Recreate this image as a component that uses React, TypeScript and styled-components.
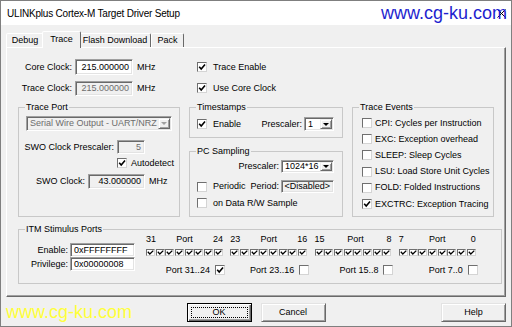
import React from "react";
import styled, { createGlobalStyle, css } from "styled-components";

const GlobalStyle = createGlobalStyle`
  html, body { margin: 0; padding: 0; background: #ffffff; }
  * { box-sizing: border-box; }
`;

const Window = styled.div`
  position: relative;
  width: 512px;
  height: 327px;
  border: 1px solid #7f7f7f;
  background: #f0f0f0;
  display: flex;
  flex-direction: column;
  font-family: "Liberation Sans", Arial, sans-serif;
  font-size: 9px;
  line-height: 11px;
  color: #000;
  overflow: hidden;
`;

const TitleBar = styled.div`
  flex: none;
  height: 24px;
  background: #ffffff;
  display: flex;
  align-items: center;
  padding: 0 5px 0 6px;
`;

const TitleText = styled.span`
  font-size: 10px;
  letter-spacing: -0.2px;
`;

const CloseGlyph = styled.svg`
  margin-left: auto;
  flex: none;
`;

const Watermark = styled.div<{ $color: string; $left: number; $top: number }>`
  position: absolute;
  left: ${(p) => p.$left}px;
  top: ${(p) => p.$top}px;
  font-size: 18px;
  line-height: 18px;
  color: ${(p) => p.$color};
  white-space: nowrap;
  pointer-events: none;
  z-index: 5;
`;

const Body = styled.div`
  flex: 1;
  display: flex;
  flex-direction: column;
  padding: 6px 5px 0 5px;
`;

const TabStrip = styled.div`
  display: flex;
  align-items: flex-end;
  height: 16px;
  position: relative;
  z-index: 2;
`;

const Tab = styled.div<{ $w: number; $active?: boolean }>`
  position: relative;
  width: ${(p) => p.$w}px;
  height: 14px;
  display: flex;
  align-items: center;
  justify-content: center;
  border: 1px solid;
  border-bottom: none;
  border-color: #ffffff #696969 transparent #ffffff;
  border-radius: 2px 2px 0 0;
  background: #f0f0f0;
  white-space: nowrap;
  ${(p) =>
    p.$active &&
    css`
      width: ${p.$w + 4}px;
      height: 17px;
      margin: 0 -2px -1px -2px;
      padding-bottom: 2px;
      z-index: 3;
    `}
`;

const TabPage = styled.div`
  position: relative;
  z-index: 1;
  width: 500px;
  height: 250px;
  border: 1px solid;
  border-color: #ffffff #696969 #696969 #ffffff;
  box-shadow: inset -1px -1px 0 #a0a0a0;
  padding: 11px 3px 0 11px;
  display: flex;
  flex-direction: column;
`;

const TopRows = styled.div`
  display: flex;
  flex-direction: column;
  gap: 5px;
`;

const ClockRow = styled.div`
  display: flex;
  align-items: center;
  height: 16px;
`;

const LabelCell = styled.div<{ $w: number }>`
  flex: none;
  width: ${(p) => p.$w}px;
  display: flex;
  justify-content: flex-end;
  white-space: nowrap;
`;

const Unit = styled.span<{ $w?: number }>`
  flex: none;
  margin-left: 4px;
  width: ${(p) => (p.$w ? `${p.$w}px` : "auto")};
  white-space: nowrap;
`;

type EditVariant = "normal" | "disabled" | "readonly";

const Edit = styled.div<{ $w: number; $h: number; $variant?: EditVariant; $align?: "left" | "right"; $ml?: number }>`
  flex: none;
  width: ${(p) => p.$w}px;
  height: ${(p) => p.$h}px;
  margin-left: ${(p) => p.$ml ?? 0}px;
  border: 1px solid;
  border-color: #a0a0a0 #ffffff #ffffff #a0a0a0;
  box-shadow: inset 1px 1px 0 #696969, inset -1px -1px 0 #e3e3e3;
  background: ${(p) => (p.$variant && p.$variant !== "normal" ? "#f0f0f0" : "#ffffff")};
  color: ${(p) => (p.$variant === "disabled" ? "#6d6d6d" : "#000000")};
  display: flex;
  align-items: center;
  justify-content: ${(p) => (p.$align === "left" ? "flex-start" : "flex-end")};
  padding: 0 3px 0 3px;
  white-space: nowrap;
  overflow: hidden;
`;

const Combo = styled.div<{ $w: number; $h: number; $disabled?: boolean; $ml?: number }>`
  flex: none;
  width: ${(p) => p.$w}px;
  height: ${(p) => p.$h}px;
  margin-left: ${(p) => p.$ml ?? 0}px;
  border: 1px solid;
  border-color: #a0a0a0 #ffffff #ffffff #a0a0a0;
  box-shadow: inset 1px 1px 0 #696969, inset -1px -1px 0 #e3e3e3;
  background: ${(p) => (p.$disabled ? "#f0f0f0" : "#ffffff")};
  color: ${(p) => (p.$disabled ? "#6d6d6d" : "#000000")};
  display: flex;
  align-items: stretch;
  padding: 1px;
  white-space: nowrap;
  overflow: hidden;
`;

const ComboText = styled.span`
  flex: 1;
  display: flex;
  align-items: center;
  padding-left: 2px;
  overflow: hidden;
`;

const ComboArrow = styled.span<{ $disabled?: boolean }>`
  flex: none;
  width: 12px;
  background: #f0f0f0;
  border: 1px solid;
  border-color: #f0f0f0 #696969 #696969 #f0f0f0;
  box-shadow: inset 1px 1px 0 #ffffff, inset -1px -1px 0 #a0a0a0;
  display: flex;
  align-items: center;
  justify-content: center;
  &::after {
    content: "";
    width: 0;
    height: 0;
    border-left: 3px solid transparent;
    border-right: 3px solid transparent;
    border-top: 3px solid ${(p) => (p.$disabled ? "#a0a0a0" : "#000000")};
  }
`;

const Box = styled.span<{ $w: number; $h: number }>`
  flex: none;
  width: ${(p) => p.$w}px;
  height: ${(p) => p.$h}px;
  background: #ffffff;
  border: 1px solid;
  border-color: #6f6f6f #d4d4d4 #d4d4d4 #6f6f6f;
  display: flex;
  align-items: center;
  justify-content: center;
`;

const CheckItem = styled.div<{ $h?: number; $gap?: number }>`
  display: flex;
  align-items: center;
  height: ${(p) => (p.$h ? `${p.$h}px` : "auto")};
  white-space: nowrap;
  & > span:last-child {
    margin-left: ${(p) => p.$gap ?? 6}px;
  }
`;

const Group = styled.fieldset<{ $w?: number; $h?: number }>`
  margin: 0;
  min-width: 0;
  width: ${(p) => (p.$w ? `${p.$w}px` : "auto")};
  height: ${(p) => (p.$h ? `${p.$h}px` : "auto")};
  border: 1px solid #c8c8c8;
  padding: 0;
  display: flex;
  flex-direction: column;
`;

const Caption = styled.legend`
  margin-left: 6px;
  padding: 0 1px;
  font-size: 9px;
  line-height: 12px;
`;

const GroupsRow = styled.div`
  display: flex;
  gap: 9px;
  height: 116px;
  margin-top: 5px;
`;

const MidColumn = styled.div`
  width: 154px;
  display: flex;
  flex-direction: column;
  gap: 7px;
`;

const TracePortBody = styled.div`
  padding: 0 7px;
  display: flex;
  flex-direction: column;
`;

const FormRow = styled.div<{ $mt: number; $h: number; $pl?: number; $end?: boolean }>`
  display: flex;
  align-items: center;
  margin-top: ${(p) => p.$mt}px;
  height: ${(p) => p.$h}px;
  padding-left: ${(p) => p.$pl ?? 0}px;
  justify-content: ${(p) => (p.$end ? "flex-end" : "flex-start")};
  white-space: nowrap;
`;

const PushRight = styled.div`
  margin-left: auto;
  display: flex;
  align-items: center;
  height: 100%;
`;

const InnerPad = styled.div<{ $pt?: number; $pl?: number; $pr?: number }>`
  display: flex;
  flex-direction: column;
  padding: ${(p) => p.$pt ?? 0}px ${(p) => p.$pr ?? 0}px 0 ${(p) => p.$pl ?? 0}px;
`;

const EventRow = styled.div`
  height: 16.2px;
  display: flex;
  align-items: center;
  white-space: nowrap;
  & > span:last-child {
    margin-left: 3px;
  }
`;

const ItmGroup = styled(Group)`
  margin-top: 6px;
  height: 61px;
`;

const ItmContent = styled.div`
  display: flex;
`;

const ItmLeft = styled.div`
  margin-top: 8px;
  display: flex;
  flex-direction: column;
`;

const ItmRow = styled.div`
  display: flex;
  align-items: center;
  height: 14px;
`;

const PortGrid = styled.div`
  margin-left: 11px;
  display: flex;
  gap: 7.4px;
`;

const PortGroup = styled.div`
  width: 76.9px;
  display: flex;
  flex-direction: column;
`;

const PortHeading = styled.div`
  height: 9px;
  line-height: 9px;
  display: flex;
  justify-content: space-between;
`;

const PortBoxes = styled.div`
  margin-top: 5px;
  height: 7px;
  display: flex;
  gap: 0.7px;
`;

const PortFooter = styled.div`
  margin-top: 9px;
  height: 10px;
  display: flex;
  align-items: center;
  justify-content: flex-end;
  margin-right: -2px;
  white-space: nowrap;
  & > span:last-child {
    margin-left: 5px;
  }
`;

const ButtonRow = styled.div`
  margin-top: 6px;
  display: grid;
  grid-template-columns: 1fr auto 1fr;
  padding: 0 0 0 0;
`;

const CenterButtons = styled.div`
  grid-column: 2;
  display: flex;
  gap: 9px;
`;

const Button = styled.div<{ $default?: boolean }>`
  position: relative;
  width: 65px;
  height: 19px;
  display: flex;
  align-items: center;
  justify-content: center;
  background: #f0f0f0;
  border: 1px solid;
  border-color: ${(p) => (p.$default ? "#000000" : "#e3e3e3 #696969 #696969 #e3e3e3")};
  box-shadow: ${(p) =>
    p.$default
      ? "inset 1px 1px 0 #ffffff, inset -1px -1px 0 #696969, inset -2px -2px 0 #a0a0a0"
      : "inset 1px 1px 0 #ffffff, inset -1px -1px 0 #a0a0a0"};
  ${(p) =>
    p.$default &&
    css`
      &::after {
        content: "";
        position: absolute;
        inset: 3px;
        border: 1px dotted #000000;
      }
    `}
`;

const HelpSlot = styled.div`
  grid-column: 3;
  justify-self: end;
`;

const CheckMark = ({ small }: { small?: boolean }) =>
  small ? (
    <svg width="7" height="5" viewBox="0 0 7 5">
      <path d="M0.8 1.8 L2.8 4 L6.3 0.6" stroke="#000" strokeWidth="1.3" fill="none" />
    </svg>
  ) : (
    <svg width="8" height="8" viewBox="0 0 8 8">
      <path d="M1.2 3.8 L3.2 6 L7 1.6" stroke="#000" strokeWidth="1.6" fill="none" />
    </svg>
  );

const Check = ({ checked }: { checked?: boolean }) => (
  <Box $w={10} $h={10}>{checked && <CheckMark />}</Box>
);

const CheckBoxLabel = ({ checked, label, gap, h }: { checked?: boolean; label: string; gap?: number; h?: number }) => (
  <CheckItem $gap={gap} $h={h}>
    <Check checked={checked} />
    <span>{label}</span>
  </CheckItem>
);

const traceEvents = [
  { label: "CPI: Cycles per Instruction", checked: false },
  { label: "EXC: Exception overhead", checked: false },
  { label: "SLEEP: Sleep Cycles", checked: false },
  { label: "LSU: Load Store Unit Cycles", checked: false },
  { label: "FOLD: Folded Instructions", checked: false },
  { label: "EXCTRC: Exception Tracing", checked: true },
];

const portGroups = [
  { hi: 31, lo: 24, priv: true },
  { hi: 23, lo: 16, priv: false },
  { hi: 15, lo: 8, priv: false },
  { hi: 7, lo: 0, priv: false },
];

export default function App() {
  return (
    <>
      <GlobalStyle />
      <Window>
        <TitleBar>
          <TitleText>ULINKplus Cortex-M Target Driver Setup</TitleText>
          <CloseGlyph width="9" height="9" viewBox="0 0 9 9">
            <path d="M0.5 0.5 L8.5 8.5 M8.5 0.5 L0.5 8.5" stroke="#000" strokeWidth="1" />
          </CloseGlyph>
        </TitleBar>
        <Watermark $color="#1e1ecf" $left={380} $top={3}>www.cg-ku.com</Watermark>
        <Watermark $color="#ffff3a" $left={5} $top={302}>www.cg-ku.com</Watermark>

        <Body>
          <TabStrip>
            <Tab $w={38}>Debug</Tab>
            <Tab $w={35} $active>Trace</Tab>
            <Tab $w={72}>Flash Download</Tab>
            <Tab $w={33}>Pack</Tab>
          </TabStrip>

          <TabPage>
            <TopRows>
              <ClockRow>
                <LabelCell $w={54}>Core Clock:</LabelCell>
                <Edit $w={58} $h={16} $ml={3}>215.000000</Edit>
                <Unit $w={60}>MHz</Unit>
                <CheckBoxLabel checked label="Trace Enable" />
              </ClockRow>
              <ClockRow>
                <LabelCell $w={54}>Trace Clock:</LabelCell>
                <Edit $w={58} $h={15} $ml={3} $variant="disabled">215.000000</Edit>
                <Unit $w={60}>MHz</Unit>
                <CheckBoxLabel checked label="Use Core Clock" />
              </ClockRow>
            </TopRows>

            <GroupsRow>
              <Group $w={162}>
                <Caption>Trace Port</Caption>
                <TracePortBody>
                  <FormRow $mt={3} $h={15}>
                    <Combo $w={146} $h={15} $disabled>
                      <ComboText>Serial Wire Output - UART/NRZ</ComboText>
                      <ComboArrow $disabled />
                    </Combo>
                  </FormRow>
                  <FormRow $mt={9} $h={14}>
                    <LabelCell $w={88}>SWO Clock Prescaler:</LabelCell>
                    <Edit $w={28} $h={14} $ml={3} $variant="disabled">5</Edit>
                  </FormRow>
                  <FormRow $mt={4} $h={10} $pl={91}>
                    <CheckBoxLabel checked label="Autodetect" gap={4} />
                  </FormRow>
                  <FormRow $mt={6} $h={15}>
                    <LabelCell $w={59}>SWO Clock:</LabelCell>
                    <Edit $w={57} $h={15} $ml={3} $variant="readonly">43.000000</Edit>
                    <Unit>MHz</Unit>
                  </FormRow>
                </TracePortBody>
              </Group>

              <MidColumn>
                <Group $h={37}>
                  <Caption>Timestamps</Caption>
                  <InnerPad $pl={7} $pr={8}>
                    <FormRow $mt={4} $h={14}>
                      <CheckBoxLabel checked label="Enable" />
                      <PushRight>
                        <span>Prescaler:</span>
                        <Combo $w={30} $h={14} $ml={2}>
                          <ComboText>1</ComboText>
                          <ComboArrow />
                        </Combo>
                      </PushRight>
                    </FormRow>
                  </InnerPad>
                </Group>
                <Group style={{ flex: 1 }}>
                  <Caption>PC Sampling</Caption>
                  <InnerPad $pl={7} $pr={8}>
                    <FormRow $mt={3} $h={13} $end>
                      <span>Prescaler:</span>
                      <Combo $w={53} $h={13} $ml={2}>
                        <ComboText>1024*16</ComboText>
                        <ComboArrow />
                      </Combo>
                    </FormRow>
                    <FormRow $mt={7} $h={13}>
                      <CheckBoxLabel label="Periodic" />
                      <PushRight>
                        <span>Period:</span>
                        <Edit $w={53} $h={13} $ml={2} $variant="readonly">&lt;Disabled&gt;</Edit>
                      </PushRight>
                    </FormRow>
                    <FormRow $mt={4} $h={12}>
                      <CheckBoxLabel label="on Data R/W Sample" />
                    </FormRow>
                  </InnerPad>
                </Group>
              </MidColumn>

              <Group $w={142}>
                <Caption>Trace Events</Caption>
                <InnerPad $pt={2} $pl={9}>
                  {traceEvents.map((e) => (
                    <EventRow key={e.label}>
                      <Check checked={e.checked} />
                      <span>{e.label}</span>
                    </EventRow>
                  ))}
                </InnerPad>
              </Group>
            </GroupsRow>

            <ItmGroup>
              <Caption>ITM Stimulus Ports</Caption>
              <ItmContent>
                <ItmLeft>
                  <ItmRow>
                    <LabelCell $w={49}>Enable:</LabelCell>
                    <Edit $w={65} $h={14} $ml={2} $align="left">0xFFFFFFFF</Edit>
                  </ItmRow>
                  <ItmRow>
                    <LabelCell $w={49}>Privilege:</LabelCell>
                    <Edit $w={65} $h={14} $ml={2} $align="left">0x00000008</Edit>
                  </ItmRow>
                </ItmLeft>
                <PortGrid>
                  {portGroups.map((g) => (
                    <PortGroup key={g.hi}>
                      <PortHeading>
                        <span>{g.hi}</span>
                        <span>Port</span>
                        <span>{g.lo}</span>
                      </PortHeading>
                      <PortBoxes>
                        {Array.from({ length: 8 }).map((_, i) => (
                          <Box key={i} $w={9} $h={7}>
                            <CheckMark small />
                          </Box>
                        ))}
                      </PortBoxes>
                      <PortFooter>
                        <span>Port {g.hi}..{g.lo}</span>
                        <Check checked={g.priv} />
                      </PortFooter>
                    </PortGroup>
                  ))}
                </PortGrid>
              </ItmContent>
            </ItmGroup>
          </TabPage>

          <ButtonRow>
            <CenterButtons>
              <Button $default>OK</Button>
              <Button>Cancel</Button>
            </CenterButtons>
            <HelpSlot>
              <Button>Help</Button>
            </HelpSlot>
          </ButtonRow>
        </Body>
      </Window>
    </>
  );
}
